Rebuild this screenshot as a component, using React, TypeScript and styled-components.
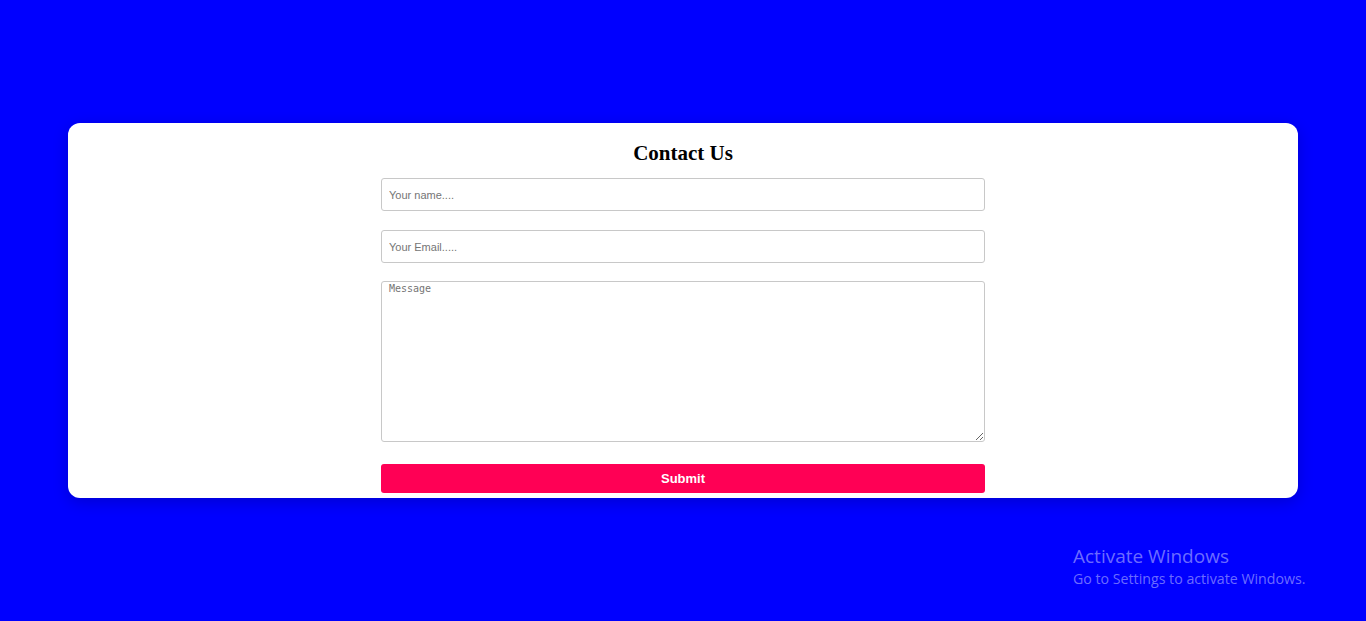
import styled, { createGlobalStyle } from "styled-components";

const Global = createGlobalStyle`
  html, body {
    margin: 0;
    padding: 0;
    background: #0000ff;
  }
`;

const Page = styled.div`
  position: relative;
  min-height: 100vh;
  display: flex;
  align-items: center;
  justify-content: center;
`;

const Card = styled.div`
  width: 1230px;
  height: 375px;
  box-sizing: border-box;
  background: #fff;
  border-radius: 12px;
  box-shadow: 0 4px 16px rgba(0, 0, 0, 0.18);
  display: flex;
  flex-direction: column;
  align-items: center;
  padding-top: 18px;
`;

const Title = styled.h2`
  margin: 0 0 13px;
  font-family: "Liberation Serif", serif;
  font-size: 21px;
  line-height: 24px;
  font-weight: bold;
  color: #000;
`;

const Form = styled.form`
  width: 604px;
  display: flex;
  flex-direction: column;
`;

const Field = styled.input`
  box-sizing: border-box;
  height: 33px;
  padding: 0 7px;
  border: 1px solid #c8c8c8;
  border-radius: 3px;
  font-family: "Liberation Sans", Arial, sans-serif;
  font-size: 11px;
  margin-bottom: ${(p: { gap: number }) => p.gap}px;
  outline: none;
  &::placeholder {
    color: #757575;
  }
`;

const Message = styled.textarea`
  box-sizing: border-box;
  height: 161px;
  padding: 1px 7px;
  border: 1px solid #c8c8c8;
  border-radius: 3px;
  font-family: "DejaVu Sans Mono", monospace;
  font-size: 10px;
  margin: 0 0 22px;
  outline: none;
  &::placeholder {
    color: #757575;
  }
`;

const Submit = styled.button`
  height: 29px;
  border: none;
  border-radius: 3px;
  background: #ff0055;
  color: #fff;
  font-family: "Liberation Sans", Arial, sans-serif;
  font-size: 13px;
  font-weight: bold;
  cursor: pointer;
`;

const Watermark = styled.div`
  position: absolute;
  left: 1073px;
  top: 547px;
  font-family: "Open Sans", "Noto Sans", sans-serif;
  color: rgba(200, 200, 255, 0.55);
  line-height: 1;
`;

const WatermarkTitle = styled.div`
  font-size: 19px;
  margin-bottom: 6px;
`;

const WatermarkSub = styled.div`
  font-size: 14.2px;
`;

export default function App() {
  return (
    <Page>
      <Global />
      <Card>
        <Title>Contact Us</Title>
        <Form onSubmit={(e) => e.preventDefault()}>
          <Field type="text" placeholder="Your name...." gap={19} />
          <Field type="email" placeholder="Your Email....." gap={18} />
          <Message placeholder="Message" />
          <Submit type="submit">Submit</Submit>
        </Form>
      </Card>
      <Watermark>
        <WatermarkTitle>Activate Windows</WatermarkTitle>
        <WatermarkSub>Go to Settings to activate Windows.</WatermarkSub>
      </Watermark>
    </Page>
  );
}
